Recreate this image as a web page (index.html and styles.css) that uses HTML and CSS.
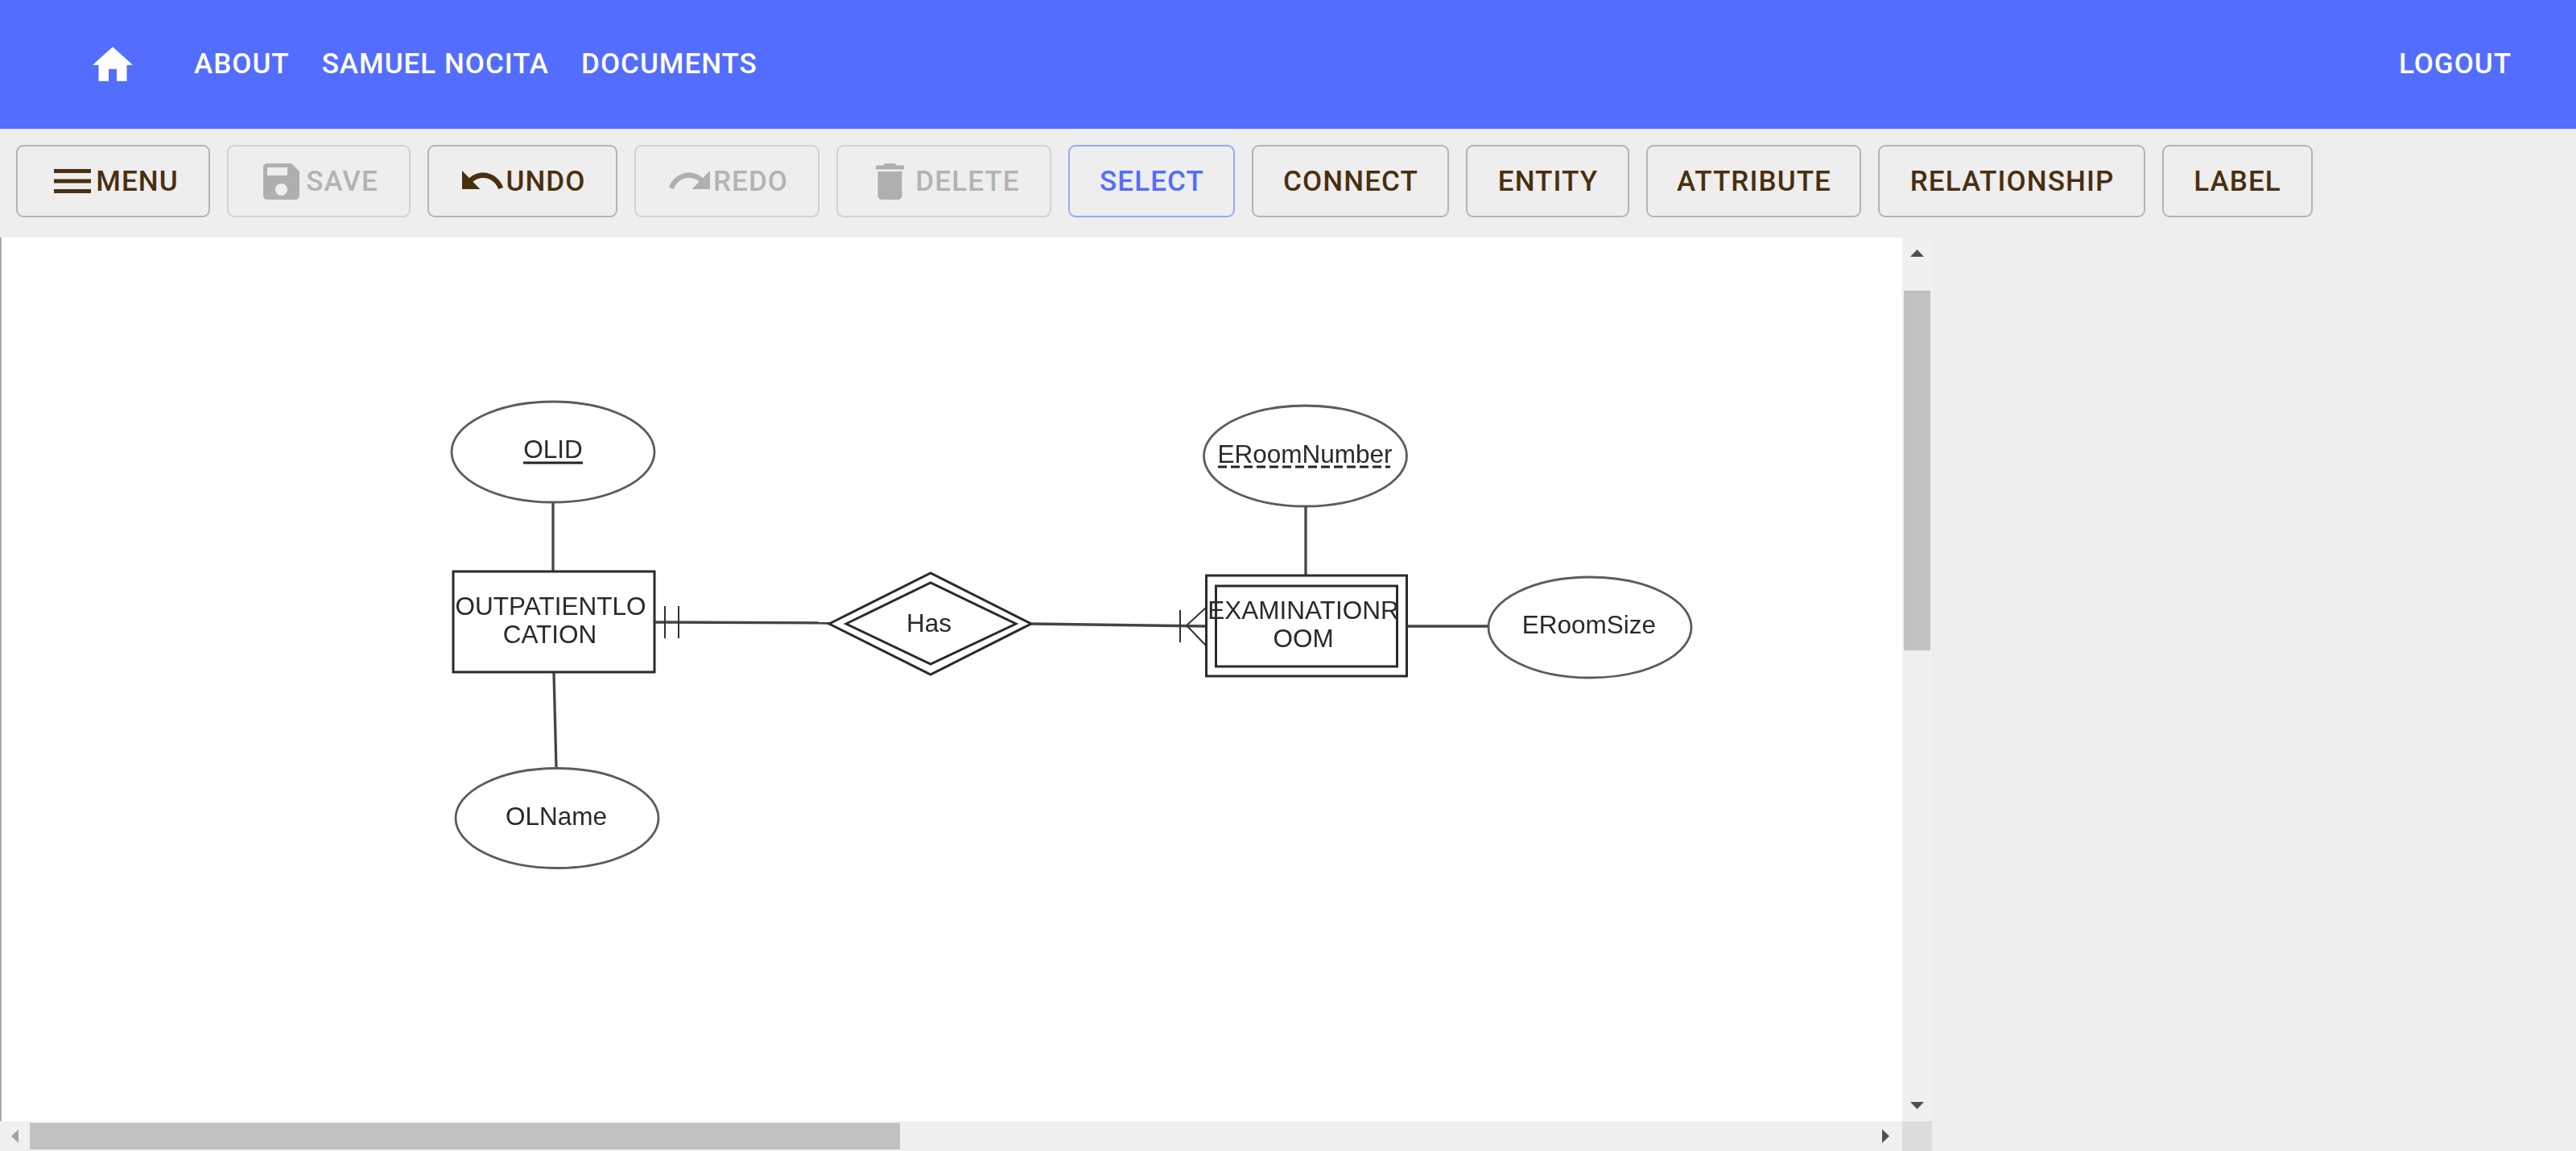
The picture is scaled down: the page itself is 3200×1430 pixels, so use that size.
FILE: index.html
```html
<!DOCTYPE html>
<html lang="en">
<head>
<meta charset="utf-8">
<title>ER Diagram</title>
<link rel="stylesheet" href="styles.css">
</head>
<body>
<div class="app">
  <header class="appbar">
    <nav class="nav">
      <a class="home" aria-label="Home"><svg class="home-icon" viewBox="2 3 20 17"><path d="M10 20v-6h4v6h5v-8h3L12 3 2 12h3v8z"/></svg></a>
      <a class="nav-link link-about">ABOUT</a>
      <a class="nav-link">SAMUEL NOCITA</a>
      <a class="nav-link">DOCUMENTS</a>
    </nav>
    <a class="nav-link">LOGOUT</a>
  </header>
  <div class="toolbar">
    <button class="btn b-menu"><svg class="ico ico-menu" viewBox="3 6 18 12" preserveAspectRatio="none"><path d="M3 18h18v-2H3v2zm0-5h18v-2H3v2zm0-7v2h18V6H3z"/></svg>MENU</button>
    <button class="btn b-save off"><svg class="ico ico-save" viewBox="3 3 18 18"><path d="M17 3H5c-1.110 0-2 .9-2 2v14c0 1.100.89 2 2 2h14c1.100 0 2-.9 2-2V7l-4-4zm-5 16c-1.660 0-3-1.340-3-3s1.340-3 3-3 3 1.340 3 3-1.340 3-3 3zm3-10H5V5h10v4z"/></svg>SAVE</button>
    <button class="btn b-undo"><svg class="ico ico-undo" viewBox="2 7 20.470 9" preserveAspectRatio="none"><path d="M12.500 8c-2.650 0-5.050.99-6.900 2.600L2 7v9h9l-3.620-3.620c1.390-1.160 3.160-1.880 5.120-1.880 3.540 0 6.550 2.310 7.600 5.500l2.370-.78C21.080 11.030 17.150 8 12.500 8z"/></svg>UNDO</button>
    <button class="btn b-redo off"><svg class="ico ico-redo" viewBox="1.540 7 20.460 9" preserveAspectRatio="none"><path d="M18.400 10.600C16.550 8.990 14.150 8 11.500 8c-4.650 0-8.580 3.030-9.960 7.220L3.900 16c1.050-3.190 4.050-5.500 7.600-5.500 1.950 0 3.730.72 5.120 1.880L13 16h9V7l-3.600 3.600z"/></svg>REDO</button>
    <button class="btn b-delete off"><svg class="ico ico-delete" viewBox="5 3 14 18"><path d="M6 19c0 1.100.9 2 2 2h8c1.100 0 2-.9 2-2V7H6v12zM19 4h-3.500l-1-1h-5l-1 1H5v2h14V4z"/></svg>DELETE</button>
    <button class="btn b-select on">SELECT</button>
    <button class="btn b-connect">CONNECT</button>
    <button class="btn b-entity">ENTITY</button>
    <button class="btn b-attribute">ATTRIBUTE</button>
    <button class="btn b-relationship">RELATIONSHIP</button>
    <button class="btn b-label">LABEL</button>
  </div>
  <main class="workspace">
    <div class="scroller">
      <div class="canvas">
        <svg class="diagram" viewBox="0 295 2363 1098">
          <defs><filter id="soft" x="-2%" y="-2%" width="104%" height="104%"><feGaussianBlur stdDeviation="0.65"/></filter></defs>
          <g filter="url(#soft)">
            <g class="shape">
              <ellipse class="oval" cx="687" cy="561.500" rx="126" ry="62.500"/>
              <path class="thick" d="M687 625V709"/>
              <rect class="bold" x="563" y="710" width="250" height="125"/>
              <path class="thick" d="M688 836 691 954"/>
              <ellipse class="oval" cx="692" cy="1016.500" rx="126" ry="62"/>
              <path class="thick" d="M814 773 1030 774"/>
              <path d="M826 753V793M843 753V793"/>
              <path class="bold" d="M1030 775 1156 712 1281 775 1156 838Z"/>
              <path class="bold" d="M1051 775 1156 724 1262 775 1156 825Z"/>
              <path class="thick" d="M1281 775 1498 778"/>
              <path d="M1466 758V798M1474 777 1498 755M1474 777 1498 802"/>
              <rect class="bold" x="1498.500" y="715" width="249" height="125"/>
              <rect class="bold" x="1510.500" y="728" width="225" height="100"/>
              <ellipse class="oval" cx="1621.500" cy="566.500" rx="126" ry="62.500"/>
              <path class="thick" d="M1622 629V714"/>
              <path class="thick" d="M1748 778H1849"/>
              <ellipse class="oval" cx="1975" cy="779.500" rx="126" ry="62.500"/>
              <path class="ink" d="M650 575H724"/>
              <path class="ink dash" d="M1513 580H1727"/>
            </g>
            <g class="labels">
              <text x="687" y="568.500">OLID</text>
              <text x="684" y="763.500">OUTPATIENTLO</text>
              <text x="683" y="798.500">CATION</text>
              <text x="691" y="1024.500">OLName</text>
              <text x="1154" y="784.500">Has</text>
              <text x="1619" y="769">EXAMINATIONR</text>
              <text x="1619" y="804">OOM</text>
              <text x="1621" y="574.500">ERoomNumber</text>
              <text x="1974" y="787">ERoomSize</text>
            </g>
          </g>
        </svg>
      </div>
      <div class="vbar">
        <svg class="arrow" viewBox="0 0 17 9"><path d="M8.500 0 17 9H0Z"/></svg>
        <div class="vtrack"><div class="vthumb"></div></div>
        <svg class="arrow" viewBox="0 0 17 9"><path d="M0 0H17L8.500 9Z"/></svg>
      </div>
      <div class="hbar">
        <svg class="harrow dim" viewBox="0 0 9 17"><path d="M9 0V17L0 8.500Z"/></svg>
        <div class="htrack"><div class="hthumb"></div></div>
        <svg class="harrow" viewBox="0 0 9 17"><path d="M0 0 9 8.500 0 17Z"/></svg>
      </div>
      <div class="corner"></div>
    </div>
  </main>
</div>
</body>
</html>
```
FILE: styles.css
```css
* { box-sizing: border-box; }
html, body { margin: 0; height: 100%; overflow: hidden; }
body { font-family: Roboto, "Liberation Sans", sans-serif; background: #eeeeee; }
.app { display: flex; flex-direction: column; width: 3200px; height: 1430px; }

.appbar { height: 160px; flex: none; background: #536dfe; color: #fff; display: flex; align-items: center; justify-content: space-between; padding: 0 80px 2px 115px; }
.nav { display: flex; align-items: center; gap: 40px; }
.home { display: block; height: 43px; }
.home-icon { display: block; width: 50px; height: 43px; fill: #fff; }
.link-about { margin-left: 36px; }
.nav-link { font-size: 35px; font-weight: 500; letter-spacing: 1px; line-height: 1; white-space: nowrap; }

.toolbar { height: 135px; flex: none; display: flex; gap: 21px; padding: 20px 20px 0; align-items: flex-start; }
.btn { height: 90px; flex: none; display: flex; align-items: center; justify-content: center; padding: 0; border: 2px solid #b4b4b4; border-radius: 9px; background: #eeeeee; color: #4a2f0f; font-family: inherit; font-size: 35px; font-weight: 500; letter-spacing: 1.1px; }
.btn.off { color: #b3b3b3; border-color: #d2d2d2; }
.btn.on { color: #536dfe; border-color: #98a8fe; }
.ico { display: block; fill: currentColor; flex: none; }
.off .ico { fill: #afafaf; }
.ico-menu { width: 46px; height: 30px; margin-right: 6px; }
.ico-save { width: 45px; height: 45px; margin-right: 8px; }
.ico-undo { width: 51px; height: 23px; margin: 0 3px 3px 0; }
.ico-redo { width: 51px; height: 23px; margin: 0 4px 3px 0; }
.ico-delete { width: 35px; height: 45px; margin-right: 14px; }
.b-menu { width: 241px; padding-left: 8px; }
.b-save { width: 228px; padding-left: 5px; }
.b-undo { width: 236px; padding-left: 4px; }
.b-redo { width: 230px; padding-left: 4px; }
.b-delete { width: 267px; padding-left: 10px; }
.b-select { width: 207px; padding-left: 1px; }
.b-connect { width: 245px; padding-left: 1px; }
.b-entity { width: 203px; padding-left: 1px; }
.b-attribute { width: 267px; padding-left: 1px; }
.b-relationship { width: 332px; padding-left: 1px; }
.b-label { width: 187px; }

.workspace { flex: 1; min-height: 0; display: flex; }
.scroller { width: 2400px; display: grid; grid-template-columns: 2363px 37px; grid-template-rows: 1098px 37px; background: #f0f0f0; }
.canvas { background: #fff; border-left: 2px solid #aaaaaa; overflow: hidden; }
.diagram { display: block; width: 2363px; height: 1098px; margin-left: -2px; }
.shape { fill: none; stroke: #333; stroke-width: 2; }
.shape .bold { stroke: #2b2b2b; stroke-width: 3; }
.shape .thick { stroke: #444; stroke-width: 3.300; }
.shape .oval { stroke: #5c5c5c; stroke-width: 2.800; }
.shape .ink { stroke: #222; stroke-width: 3; }
.shape .dash { stroke-dasharray: 11 5; }
.labels { font-family: "Liberation Sans", Arial, sans-serif; font-size: 31.500px; fill: #2a2a2a; text-anchor: middle; }

.vbar { display: flex; flex-direction: column; align-items: center; background: #f0f0f0; }
.arrow { width: 17px; height: 9px; flex: none; margin: 15px 0; fill: #505050; }
.vtrack { flex: 1; align-self: stretch; padding: 27px 2px 0; }
.vthumb { height: 447px; background: #c1c1c1; }
.hbar { display: flex; align-items: center; background: #f0f0f0; padding: 0 16px 0 14px; }
.harrow { width: 9px; height: 17px; flex: none; fill: #505050; }
.harrow.dim { fill: #a3a3a3; }
.htrack { flex: 1; height: 33px; padding-left: 14px; }
.hthumb { width: 1081px; height: 33px; background: #c1c1c1; }
.corner { background: #dcdcdc; }
```
